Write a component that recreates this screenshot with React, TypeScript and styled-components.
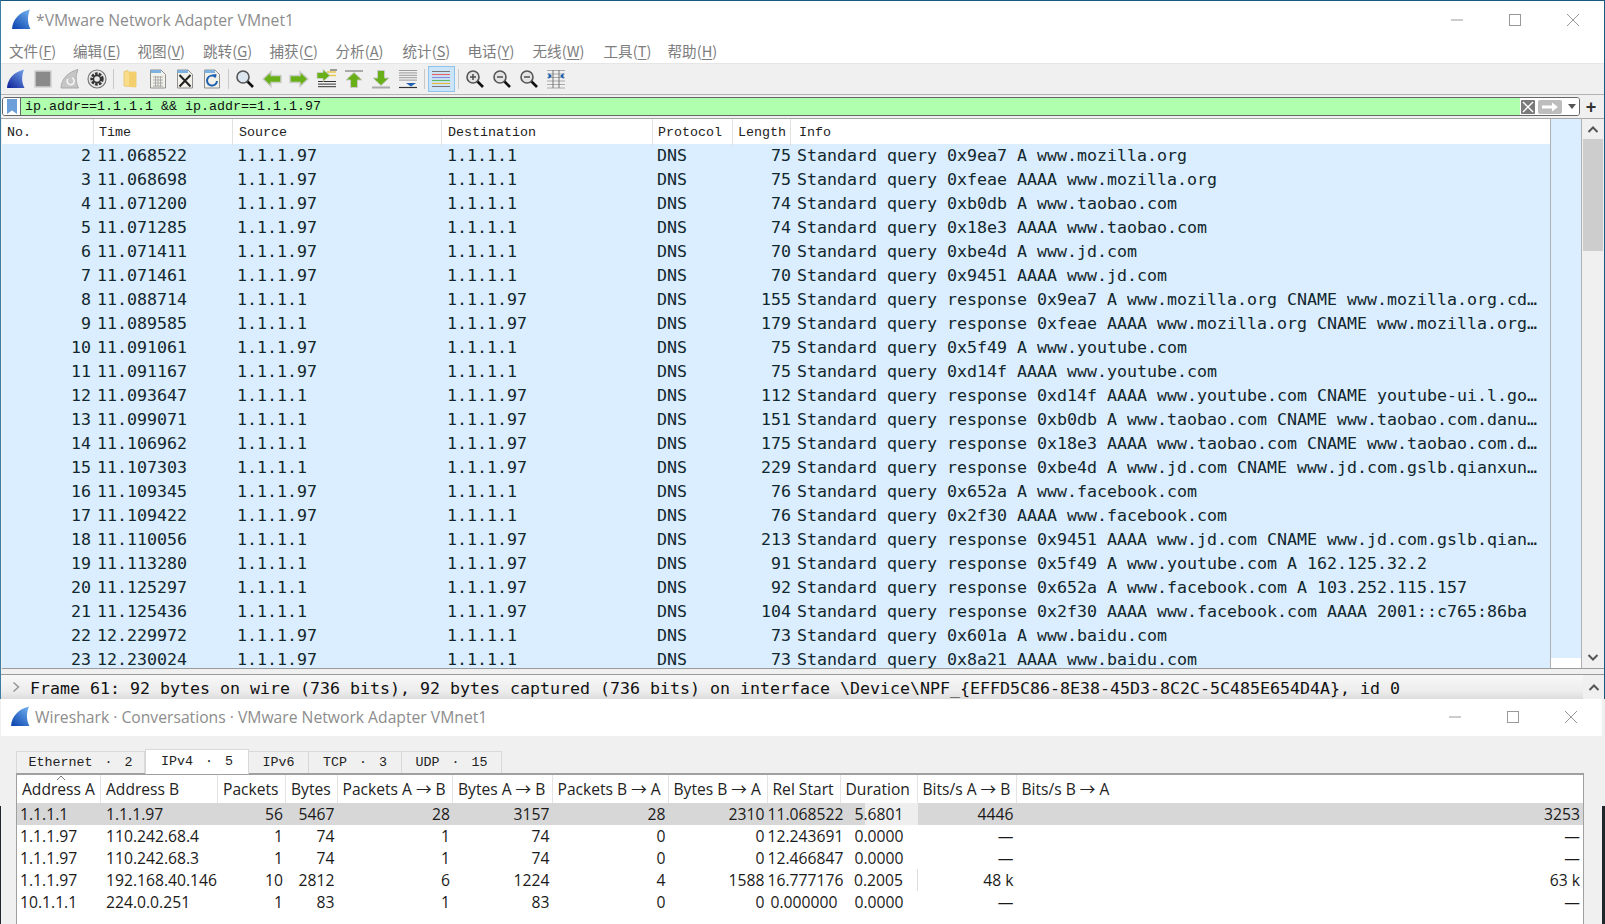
import React from 'react';
import styled, { createGlobalStyle } from 'styled-components';

const Global = createGlobalStyle`
  html, body { margin: 0; padding: 0; height: 924px; overflow: hidden; background: #f0f0f0; }
  #root { height: 924px; }
`;

const Page = styled.div`
  width: 1605px; height: 924px; display: flex; flex-direction: column; overflow: hidden;
  background: linear-gradient(#f0f0f0 0 806px, #20262c 806px);
`;
const MainWindow = styled.div`
  height: 699px; flex: none; display: flex; flex-direction: column; box-sizing: border-box;
  background: #f0f0f0; border-top: 1px solid #1b5a80; border-left: 1px solid #3c7da0; border-right: 1px solid #1b5a80;
`;
const TitleBar = styled.div<{ $h: number; $left: number; $pb?: number }>`
  height: ${p => p.$h}px; flex: none; display: flex; align-items: center; background: #fff; box-sizing: border-box;
  padding: 0 2px ${p => p.$pb ?? 0}px ${p => p.$left}px; gap: 4px;
  font: 15.7px "Open Sans", "Noto Sans", sans-serif; color: #8d8d8d;
`;
const Controls = styled.div`
  margin-left: auto; display: flex;
`;
const Ctl = styled.div`
  width: 58px; height: 30px; display: flex; align-items: center; justify-content: center;
`;
const MenuBar = styled.div`
  height: 24px; flex: none; display: flex; align-items: center; box-sizing: border-box; background: #fff; padding: 0 0 2px 8px;
  border-bottom: 1px solid #e6e6e6;
  font: 14.6px "Noto Sans CJK SC", sans-serif; color: #7d7d7d;
`;
const MenuItem = styled.span<{ $w: number }>`
  width: ${p => p.$w}px; flex: none; white-space: nowrap;
  u { text-decoration-thickness: 1px; text-underline-offset: 2px; }
`;
const ToolBar = styled.div`
  height: 30px; flex: none; display: flex; align-items: center; padding-left: 1px; box-sizing: content-box;
  background: #f0f0f0; border-bottom: 1px solid #b4b4b4;
`;
const ToolBtn = styled.div<{ $on?: boolean }>`
  width: 27.2px; height: 26px; flex: none; display: flex; align-items: center; justify-content: center; box-sizing: border-box;
  ${p => p.$on ? 'background: #cce4f7; border: 1px solid #8fc3ec;' : ''}
`;
const ToolSep = styled.div`
  width: 6px; height: 20px; flex: none; display: flex; justify-content: center;
  &::before { content: ''; width: 1px; background: #c8c8c8; }
`;
const FilterRow = styled.div`
  height: 24px; flex: none; display: flex; align-items: center; padding-left: 1px;
  background: #f0f0f0; border-bottom: 1px solid #a8a8a8; box-sizing: border-box;
`;
const FilterBox = styled.div`
  width: 1578px; height: 19px; flex: none; display: flex; align-items: stretch; box-sizing: border-box; background: #fff;
  border: 1px solid #666; border-radius: 3px; overflow: hidden;
`;
const Bookmark = styled.div`
  width: 17px; flex: none; display: flex; align-items: center; justify-content: center; background: #fff;
`;
const FilterInput = styled.div`
  flex: 1; background: #afffaf; padding-left: 4px; border-left: 1px solid #666;
  font: 13.33px/17px "Liberation Mono", monospace; color: #111; white-space: pre;
`;
const FilterEnd = styled.div`
  width: 58px; flex: none; display: flex; align-items: center; padding-left: 1px; gap: 3px; background: #fff;
`;
const PlusBtn = styled.div`
  width: 22px; flex: none; text-align: center; font: bold 18px/18px "Liberation Sans", sans-serif; color: #333;
`;
const ListWrap = styled.div`
  height: 549px; flex: none; display: flex; background: #fff; border-bottom: 1px solid #9a9a9a; margin-left: 1px;
`;
const ListMain = styled.div`
  width: 1548px; flex: none; overflow: hidden;
`;
const COLS = '92px 139px 209px 211px 80px 58px 1fr';
const ListHead = styled.div`
  height: 25px; display: grid; grid-template-columns: ${COLS}; background: #fff;
  font: 13.33px/27px "Liberation Mono", monospace; color: #222;
`;
const HeadCell = styled.div<{ $pl: number }>`
  padding-left: ${p => p.$pl}px; border-right: 1px solid #e2e2e2; white-space: pre;
  &:last-child { border-right: none; }
`;
const PacketRow = styled.div`
  height: 24px; display: grid; grid-template-columns: ${COLS}; background: #daeeff;
  font: 16.62px/24px "DejaVu Sans Mono", monospace; color: #12272e; white-space: pre;
`;
const PCell = styled.div<{ $pl?: number; $pr?: number; $right?: boolean }>`
  padding: 0 ${p => p.$pr ?? 0}px 0 ${p => p.$pl ?? 0}px; overflow: hidden;
  ${p => p.$right ? 'text-align: right;' : ''}
`;
const Minimap = styled.div`
  width: 30px; flex: none; box-sizing: content-box; border-left: 1px solid #b0b0b0; border-right: 1px solid #b0b0b0;
  background: linear-gradient(#daeeff 0 539px, #fff 539px);
`;
const ScrollBar = styled.div`
  flex: 1; display: flex; flex-direction: column; background: #f0f0f0;
`;
const ScrollArrow = styled.div`
  height: 20px; flex: none; display: flex; align-items: center; justify-content: center;
`;
const Thumb = styled.div`
  height: 112px; flex: none; background: #cdcdcd; margin: 0 1px;
`;
const Spacer = styled.div`
  flex: 1;
`;
const Splitter = styled.div`
  height: 5px; flex: none; background: #f0f0f0; border-bottom: 1px solid #9a9a9a;
`;
const DetailRow = styled.div`
  flex: 1; display: flex; align-items: center; background: linear-gradient(#f8f8f8, #ececec 70%, #dcdcdc);
  font: 16.63px/23px "DejaVu Sans Mono", monospace; color: #111; white-space: pre; overflow: hidden;
`;
const Expander = styled.div`
  width: 29px; flex: none; display: flex; justify-content: center;
`;
const DetailText = styled.span`
  margin-top: 3px;
`;
const DetailArrow = styled.div`
  margin-left: auto; width: 21px; height: 100%; flex: none; display: flex; align-items: center; justify-content: center; background: #f0f0f0;
`;
const ConvWindow = styled.div`
  flex: 1; margin: 0 3px 0 1px; display: flex; flex-direction: column; background: #f0f0f0; min-height: 0;
`;
const TabStrip = styled.div`
  margin: 14px 0 0 15px; height: 23px; flex: none; display: flex; align-items: flex-end;
  font: 13.33px "Liberation Mono", monospace; color: #222; white-space: pre;
`;
const Tab = styled.div<{ $w: number; $on?: boolean }>`
  width: ${p => p.$w}px; box-sizing: border-box; flex: none; text-align: center;
  height: ${p => p.$on ? 25 : 22}px; line-height: ${p => p.$on ? 23 : 22}px; margin-bottom: ${p => p.$on ? -1 : 0}px;
  background: ${p => p.$on ? '#fff' : '#f0f0f0'}; border: 1px solid #d9d9d9; border-bottom: none; border-left-width: ${p => p.$on ? 1 : 0}px;
  position: relative; z-index: ${p => p.$on ? 1 : 0};
  &:first-child { border-left-width: 1px; }
`;
const TabDot = styled.span`
  margin: 0 12px;
`;
const TablePane = styled.div`
  flex: 1; margin: 0 18px 0 15px; background: #fff; border: 1px solid #a0a0a0; border-bottom: none; border-top-width: 2px;
  position: relative; min-height: 0; overflow: hidden;
`;
const CCOLS = '84px 117px 68px 51.5px 115.5px 99.5px 116px 99px 73px 77px 99px 1fr';
const CHead = styled.div`
  height: 28px; display: grid; grid-template-columns: ${CCOLS};
  font: 15.6px/29px "Open Sans", "Noto Sans CJK SC", sans-serif; color: #222; white-space: pre;
`;
const CHeadCell = styled.div`
  padding-left: 5px; border-right: 1px solid #e4e4e4; overflow: hidden;
  &:last-child { border-right: none; }
`;
const SortMark = styled.svg`
  position: absolute; left: 39px; top: 0; 
`;
const CRow = styled.div<{ $sel?: boolean }>`
  height: 22px; display: grid; grid-template-columns: ${CCOLS}; background: ${p => p.$sel ? '#d7d7d7' : '#fff'};
  font: 15.7px/22px "Open Sans", "Noto Sans CJK SC", sans-serif; color: #1a1a1a; white-space: pre;
`;
const CCell = styled.div<{ $a: 'l' | 'r' | 'c'; $pl?: number; $bar?: boolean; $line?: boolean }>`
  text-align: ${p => p.$a === 'l' ? 'left' : p.$a === 'r' ? 'right' : 'center'};
  padding: 0 ${p => p.$a === 'r' ? 3 : 0}px 0 ${p => p.$pl ?? 0}px;
  background: ${p => p.$bar ? 'linear-gradient(90deg, transparent 0 24px, #eeeeee 24px)' : 'none'};
  ${p => p.$line ? 'border-right: 1px solid #ddd;' : ''}
`;

const Fin = ({ s = 21, a = '#6fb0ee', b = '#0d45b0', id }: { s?: number; a?: string; b?: string; id: string }) => (
  <svg width={s} height={s} viewBox="0 0 20 20">
    <defs><linearGradient id={id} x1="0.9" y1="0" x2="0.1" y2="1"><stop offset="0" stopColor={a} /><stop offset="1" stopColor={b} /></linearGradient></defs>
    <path d="M1 19C1.5 10 8 3 18 .5 15.5 7 15.5 13 18.5 19Z" fill={`url(#${id})`} />
  </svg>
);
const Mag = ({ sign }: { sign?: '+' | '-' }) => (
  <svg width="20" height="20" viewBox="0 0 20 20">
    <path d="M11.5 11.5L18 18" stroke="#111" strokeWidth="2.6" />
    <circle cx="8" cy="8" r="6" fill={sign ? '#e4e4e4' : '#dce6ee'} stroke="#555" strokeWidth="1.6" />
    {sign && <path d="M5 8h6" stroke="#444" strokeWidth="1.4" />}
    {sign === '+' && <path d="M8 5v6" stroke="#444" strokeWidth="1.4" />}
  </svg>
);
const Arrow = ({ dir }: { dir: 'l' | 'r' }) => (
  <svg width="20" height="20" viewBox="0 0 20 20">
    <g transform={dir === 'r' ? 'matrix(-1 0 0 1 20 0)' : undefined}>
      <path d="M1 10L9 2.5V6.5H19V13.5H9V17.5Z" fill="#69b018" stroke="#cdcdcd" strokeWidth="1.4" />
    </g>
  </svg>
);
const Lines = ({ n, y0, step, c = '#555' }: { n: number; y0: number; step: number; c?: string }) => (
  <>{Array.from({ length: n }, (_, i) => <path key={i} d={`M2 ${y0 + i * step}H20`} stroke={c} strokeWidth="1" />)}</>
);

const Icons: Record<string, React.ReactNode> = {
  start: <Fin id="f2" s={20} a="#6f9fe8" b="#12269a" />,
  stop: <svg width="20" height="20" viewBox="0 0 20 20"><rect x="2" y="2" width="16" height="16" fill="#8a8a8a" stroke="#d0d0d0" strokeWidth="1.5" /></svg>,
  restart: <svg width="20" height="20" viewBox="0 0 20 20"><path d="M1 19C1.5 10 8 3 18 .5 15.5 7 15.5 13 18.5 19Z" fill="#c6c6c6" stroke="#aaa" /><path d="M12 9a3.5 3.5 0 1 1-4 1" fill="none" stroke="#f4f4f4" strokeWidth="1.6" /></svg>,
  gear: <svg width="20" height="20" viewBox="0 0 20 20"><circle cx="10" cy="10" r="9" fill="#e8e8e8" stroke="#777" strokeWidth="1.2" /><circle cx="10" cy="10" r="5.4" fill="none" stroke="#333" strokeWidth="2.6" strokeDasharray="2.6 1.2" /><circle cx="10" cy="10" r="3.6" fill="none" stroke="#333" strokeWidth="1.6" /></svg>,
  folder: <svg width="20" height="20" viewBox="0 0 20 20"><path d="M4 2.5L8 1.5V3H16V18L4 17Z" fill="#f9dd8a" stroke="#e5c46a" strokeWidth=".8" /><path d="M9 3H16V18H9Z" fill="#f4cf6e" /></svg>,
  file: <svg width="20" height="20" viewBox="0 0 20 20"><path d="M2.5 1H13L17.5 5.5V19H2.5Z" fill="#f2f2ea" stroke="#777" strokeWidth=".8" /><path d="M2.5 1H13V4H2.5Z" fill="#7db2e0" /><path d="M5 8h10M5 11h10M5 14h10M5 17h10M7.5 7v11M10 7v11M12.5 7v11" stroke="#aaa" strokeWidth="1" /></svg>,
  fileX: <svg width="20" height="20" viewBox="0 0 20 20"><path d="M2.5 1H13L17.5 5.5V19H2.5Z" fill="#f2f2ea" stroke="#777" strokeWidth=".8" /><path d="M2.5 1H13V4H2.5Z" fill="#7db2e0" /><path d="M4.5 6L15.5 17.5M15.5 6L4.5 17.5" stroke="#222" strokeWidth="2" /></svg>,
  fileR: <svg width="20" height="20" viewBox="0 0 20 20"><path d="M2.5 1H13L17.5 5.5V19H2.5Z" fill="#f2f2ea" stroke="#777" strokeWidth=".8" /><path d="M2.5 1H13V4H2.5Z" fill="#7db2e0" /><path d="M13.5 8A5 5 0 1 0 15 12" fill="none" stroke="#1d5fb0" strokeWidth="2" /><path d="M10.5 5.5L14.5 5L14 9Z" fill="#1d5fb0" /></svg>,
  find: <Mag />,
  back: <Arrow dir="l" />,
  forward: <Arrow dir="r" />,
  goto: <svg width="22" height="20" viewBox="0 0 22 20"><Lines n={3} y0={12.5} step={2.6} c="#333" /><path d="M11 3h9M13 6.5h7" stroke="#e6c84a" strokeWidth="1.4" /><path d="M14 6.5L7 .5V3.5H1V9.5H7V12.5Z" fill="#69b018" stroke="#d0d0d0" strokeWidth=".8" /><path d="M14 1H21" stroke="#444" /></svg>,
  top: <svg width="20" height="20" viewBox="0 0 20 20"><path d="M1 2H19" stroke="#aaa" strokeWidth="2" /><path d="M10 3.5L18 11H13.5V18.5H6.5V11H2Z" fill="#69b018" stroke="#c9c9c9" /></svg>,
  bottom: <svg width="20" height="20" viewBox="0 0 20 20"><path d="M1 18.5H19" stroke="#aaa" strokeWidth="2" /><path d="M10 16.5L18 9H13.5V1.5H6.5V9H2Z" fill="#69b018" stroke="#c9c9c9" /></svg>,
  last: <svg width="22" height="20" viewBox="0 0 22 20"><Lines n={5} y0={1.5} step={2.4} c="#999" /><path d="M2 18.5H20" stroke="#333" strokeWidth="1.2" /><path d="M9 14H19L14 17.5Z" fill="#1d5fb0" /></svg>,
  color: <svg width="20" height="20" viewBox="0 0 20 20"><path d="M1 2.5H19" stroke="#777" /><path d="M1 5.5H19" stroke="#e86060" strokeWidth="1.1" /><path d="M1 8.5H19" stroke="#8a8ad8" strokeWidth="1.1" /><path d="M1 11.5H19" stroke="#60b860" strokeWidth="1.1" /><path d="M1 14.5H19" stroke="#e8b830" strokeWidth="1.1" /><path d="M1 17.5H19" stroke="#777" /></svg>,
  zin: <Mag sign="+" />,
  zout: <Mag sign="-" />,
  znorm: <Mag sign="-" />,
  resize: <svg width="20" height="20" viewBox="0 0 20 20"><path d="M1 1.5H19M1 5H19M1 8.5H19M1 12H19M1 15.5H19M1 19H19" stroke="#aaa" /><path d="M7 1V19M13 1V19" stroke="#777" /><path d="M2.5 4L6 7L2.5 10ZM17.5 4L14 7L17.5 10Z" fill="#1d5fb0" /></svg>,
};

const WinControls = () => (
  <Controls>
    <Ctl><svg width="14" height="14" viewBox="0 0 14 14"><path d="M1 7H13" stroke="#999" /></svg></Ctl>
    <Ctl><svg width="14" height="14" viewBox="0 0 14 14"><rect x="1.5" y="1.5" width="11" height="11" fill="none" stroke="#999" /></svg></Ctl>
    <Ctl><svg width="14" height="14" viewBox="0 0 14 14"><path d="M1 1L13 13M13 1L1 13" stroke="#999" /></svg></Ctl>
  </Controls>
);

const menus: [string, string, number][] = [['文件', 'F', 64], ['编辑', 'E', 64.5], ['视图', 'V', 65.5], ['跳转', 'G', 66.5], ['捕获', 'C', 66], ['分析', 'A', 67], ['统计', 'S', 65], ['电话', 'Y', 65], ['无线', 'W', 71], ['工具', 'T', 64], ['帮助', 'H', 60]];

const tools: (string | null)[] = ['start', 'stop', 'restart', 'gear', null, 'folder', 'file', 'fileX', 'fileR', null, 'find', 'back', 'forward', 'goto', 'top', 'bottom', 'last', null, 'color', null, 'zin', 'zout', 'znorm', 'resize'];

const packets: [number, string, string, string, number, string][] = [
  [2, '11.068522', '1.1.1.97', '1.1.1.1', 75, 'Standard query 0x9ea7 A www.mozilla.org'],
  [3, '11.068698', '1.1.1.97', '1.1.1.1', 75, 'Standard query 0xfeae AAAA www.mozilla.org'],
  [4, '11.071200', '1.1.1.97', '1.1.1.1', 74, 'Standard query 0xb0db A www.taobao.com'],
  [5, '11.071285', '1.1.1.97', '1.1.1.1', 74, 'Standard query 0x18e3 AAAA www.taobao.com'],
  [6, '11.071411', '1.1.1.97', '1.1.1.1', 70, 'Standard query 0xbe4d A www.jd.com'],
  [7, '11.071461', '1.1.1.97', '1.1.1.1', 70, 'Standard query 0x9451 AAAA www.jd.com'],
  [8, '11.088714', '1.1.1.1', '1.1.1.97', 155, 'Standard query response 0x9ea7 A www.mozilla.org CNAME www.mozilla.org.cd…'],
  [9, '11.089585', '1.1.1.1', '1.1.1.97', 179, 'Standard query response 0xfeae AAAA www.mozilla.org CNAME www.mozilla.org…'],
  [10, '11.091061', '1.1.1.97', '1.1.1.1', 75, 'Standard query 0x5f49 A www.youtube.com'],
  [11, '11.091167', '1.1.1.97', '1.1.1.1', 75, 'Standard query 0xd14f AAAA www.youtube.com'],
  [12, '11.093647', '1.1.1.1', '1.1.1.97', 112, 'Standard query response 0xd14f AAAA www.youtube.com CNAME youtube-ui.l.go…'],
  [13, '11.099071', '1.1.1.1', '1.1.1.97', 151, 'Standard query response 0xb0db A www.taobao.com CNAME www.taobao.com.danu…'],
  [14, '11.106962', '1.1.1.1', '1.1.1.97', 175, 'Standard query response 0x18e3 AAAA www.taobao.com CNAME www.taobao.com.d…'],
  [15, '11.107303', '1.1.1.1', '1.1.1.97', 229, 'Standard query response 0xbe4d A www.jd.com CNAME www.jd.com.gslb.qianxun…'],
  [16, '11.109345', '1.1.1.97', '1.1.1.1', 76, 'Standard query 0x652a A www.facebook.com'],
  [17, '11.109422', '1.1.1.97', '1.1.1.1', 76, 'Standard query 0x2f30 AAAA www.facebook.com'],
  [18, '11.110056', '1.1.1.1', '1.1.1.97', 213, 'Standard query response 0x9451 AAAA www.jd.com CNAME www.jd.com.gslb.qian…'],
  [19, '11.113280', '1.1.1.1', '1.1.1.97', 91, 'Standard query response 0x5f49 A www.youtube.com A 162.125.32.2'],
  [20, '11.125297', '1.1.1.1', '1.1.1.97', 92, 'Standard query response 0x652a A www.facebook.com A 103.252.115.157'],
  [21, '11.125436', '1.1.1.1', '1.1.1.97', 104, 'Standard query response 0x2f30 AAAA www.facebook.com AAAA 2001::c765:86ba'],
  [22, '12.229972', '1.1.1.97', '1.1.1.1', 73, 'Standard query 0x601a A www.baidu.com'],
  [23, '12.230024', '1.1.1.97', '1.1.1.1', 73, 'Standard query 0x8a21 AAAA www.baidu.com'],
];

const listHead: [string, number][] = [['No.', 5], ['Time', 5], ['Source', 6], ['Destination', 6], ['Protocol', 5], ['Length', 5], ['Info', 8]];
const cHead = ['Address A', 'Address B', 'Packets', 'Bytes', 'Packets A → B', 'Bytes A → B', 'Packets B → A', 'Bytes B → A', 'Rel Start', 'Duration', 'Bits/s A → B', 'Bits/s B → A'];
const conv = [
  ['1.1.1.1', '1.1.1.97', '56', '5467', '28', '3157', '28', '2310', '11.068522', '5.6801', '4446', '3253'],
  ['1.1.1.97', '110.242.68.4', '1', '74', '1', '74', '0', '0', '12.243691', '0.0000', '—', '—'],
  ['1.1.1.97', '110.242.68.3', '1', '74', '1', '74', '0', '0', '12.466847', '0.0000', '—', '—'],
  ['1.1.1.97', '192.168.40.146', '10', '2812', '6', '1224', '4', '1588', '16.777176', '0.2005', '48 k', '63 k'],
  ['10.1.1.1', '224.0.0.251', '1', '83', '1', '83', '0', '0', '0.000000', '0.0000', '—', '—'],
];
const align = (i: number): 'l' | 'r' | 'c' => (i < 2 ? 'l' : i === 8 || i === 9 ? 'c' : 'r');
const tabs: [string, string | null, number, boolean][] = [['Ethernet', '2', 129, false], ['IPv4', '5', 104, true], ['IPv6', null, 60, false], ['TCP', '3', 93, false], ['UDP', '15', 100, false]];

const Chevron = ({ up, c = '#555' }: { up?: boolean; c?: string }) => (
  <svg width="12" height="8" viewBox="0 0 12 8"><path d={up ? 'M1.5 7L6 2.5L10.5 7' : 'M1.5 1L6 5.5L10.5 1'} fill="none" stroke={c} strokeWidth="2" /></svg>
);

export default function App() {
  return (
    <Page>
      <Global />
      <MainWindow>
        <TitleBar $h={39} $left={10} $pb={2}>
          <Fin id="f1" />
          <span>*VMware Network Adapter VMnet1</span>
          <WinControls />
        </TitleBar>
        <MenuBar>
          {menus.map(([n, k, w]) => <MenuItem key={n} $w={w}>{n}(<u>{k}</u>)</MenuItem>)}
        </MenuBar>
        <ToolBar>
          {tools.map((t, i) => t === null ? <ToolSep key={i} /> : <ToolBtn key={i} $on={t === 'color'}>{Icons[t]}</ToolBtn>)}
        </ToolBar>
        <FilterRow>
          <FilterBox>
            <Bookmark><svg width="10" height="15" viewBox="0 0 10 15"><path d="M0 0H10V15L5 11.5L0 15Z" fill="#6f9fd8" /></svg></Bookmark>
            <FilterInput>ip.addr==1.1.1.1 &amp;&amp; ip.addr==1.1.1.97</FilterInput>
            <FilterEnd>
              <svg width="14" height="14" viewBox="0 0 14 14"><rect width="14" height="14" rx="1" fill="#7a7a7a" /><path d="M2 2L12 12M12 2L2 12" stroke="#fff" strokeWidth="1.4" /></svg>
              <svg width="24" height="14" viewBox="0 0 24 14"><rect width="24" height="14" rx="2" fill="#bdbdbd" /><path d="M4 5.5H14V2.5L20 7L14 11.5V8.5H4Z" fill="#fff" /></svg>
              <svg style={{ marginLeft: 3 }} width="8" height="5" viewBox="0 0 8 5"><path d="M0 0H8L4 5Z" fill="#555" /></svg>
            </FilterEnd>
          </FilterBox>
          <PlusBtn>+</PlusBtn>
        </FilterRow>
        <ListWrap>
          <ListMain>
            <ListHead>
              {listHead.map(([h, pl]) => <HeadCell key={h} $pl={pl}>{h}</HeadCell>)}
            </ListHead>
            {packets.map(p => (
              <PacketRow key={p[0]}>
                <PCell $right $pr={3}>{p[0]}</PCell>
                <PCell $pl={3}>{p[1]}</PCell>
                <PCell $pl={4}>{p[2]}</PCell>
                <PCell $pl={5}>{p[3]}</PCell>
                <PCell $pl={4}>DNS</PCell>
                <PCell $right>{p[4]}</PCell>
                <PCell $pl={6}>{p[5]}</PCell>
              </PacketRow>
            ))}
          </ListMain>
          <Minimap />
          <ScrollBar>
            <ScrollArrow><Chevron up /></ScrollArrow>
            <Thumb />
            <Spacer />
            <ScrollArrow><Chevron /></ScrollArrow>
          </ScrollBar>
        </ListWrap>
        <Splitter />
        <DetailRow>
          <Expander><svg width="8" height="12" viewBox="0 0 8 12"><path d="M1.5 1.5L6.5 6L1.5 10.5" fill="none" stroke="#999" strokeWidth="1.6" /></svg></Expander>
          <DetailText>{'Frame 61: 92 bytes on wire (736 bits), 92 bytes captured (736 bits) on interface \\Device\\NPF_{EFFD5C86-8E38-45D3-8C2C-5C485E654D4A}, id 0'}</DetailText>
          <DetailArrow><Chevron up /></DetailArrow>
        </DetailRow>
      </MainWindow>
      <ConvWindow>
        <TitleBar $h={37} $left={9} $pb={2}>
          <Fin id="f3" />
          <span>Wireshark · Conversations · VMware Network Adapter VMnet1</span>
          <WinControls />
        </TitleBar>
        <TabStrip>
          {tabs.map(([n, c, w, on]) => (
            <Tab key={n} $w={w} $on={on}>{n}{c && <><TabDot>·</TabDot>{c}</>}</Tab>
          ))}
        </TabStrip>
        <TablePane>
          <SortMark width="10" height="6" viewBox="0 0 10 6"><path d="M1 5L5 1L9 5" fill="none" stroke="#777" /></SortMark>
          <CHead>
            {cHead.map(h => <CHeadCell key={h}>{h}</CHeadCell>)}
          </CHead>
          {conv.map((r, ri) => (
            <CRow key={ri} $sel={ri === 0}>
              {r.map((c, i) => <CCell key={i} $a={align(i)} $pl={i === 0 ? 3 : i === 1 ? 5 : 0} $bar={ri === 0 && i === 9} $line={ri === 3 && i === 9}>{c}</CCell>)}
            </CRow>
          ))}
        </TablePane>
      </ConvWindow>
    </Page>
  );
}
